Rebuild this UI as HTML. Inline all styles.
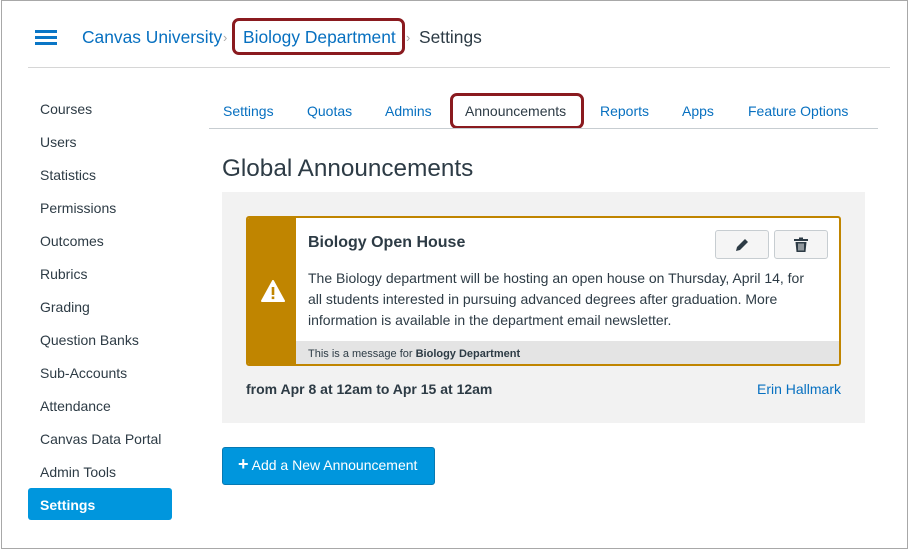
<!DOCTYPE html>
<html><head><style>
*{margin:0;padding:0;box-sizing:border-box}
body{width:910px;height:552px;background:#fff;font-family:"Liberation Sans",sans-serif;position:relative;overflow:hidden;color:#2d3b45}
.win{position:absolute;left:1px;top:0;width:907px;height:549px;border:1px solid #a8a8a8;background:#fff}
.a{position:absolute;white-space:nowrap}
.blue{color:#0770c0}
.side{position:absolute;left:40px;font-size:14px;color:#2d3b45}
.tab{position:absolute;top:103px;font-size:14px;color:#0770c0}
.red{position:absolute;border:3px solid #8a1a1f;border-radius:7px}
</style></head><body>
<div class="win"></div>
<div class="a" style="left:35px;top:30px;width:22px;height:3px;background:#0a76c6;box-shadow:0 6px 0 #0a76c6,0 12px 0 #0a76c6"></div>
<div class="a blue" style="left:82px;top:27px;font-size:17.4px">Canvas University</div>
<div class="a" style="left:223px;top:30px;font-size:13px;color:#aaa">›</div>
<div class="a blue" style="left:243px;top:27px;font-size:17.4px">Biology Department</div>
<div class="red" style="left:232px;top:18px;width:173px;height:37px"></div>
<div class="a" style="left:406px;top:30px;font-size:13px;color:#aaa">›</div>
<div class="a" style="left:419px;top:27px;font-size:17.4px;color:#2d3b45">Settings</div>
<div class="a" style="left:28px;top:67px;width:862px;height:1px;background:#d6d6d6"></div>

<div class="side" style="top:101px">Courses</div>
<div class="side" style="top:134px">Users</div>
<div class="side" style="top:167px">Statistics</div>
<div class="side" style="top:200px">Permissions</div>
<div class="side" style="top:233px">Outcomes</div>
<div class="side" style="top:266px">Rubrics</div>
<div class="side" style="top:299px">Grading</div>
<div class="side" style="top:332px">Question Banks</div>
<div class="side" style="top:365px">Sub-Accounts</div>
<div class="side" style="top:398px">Attendance</div>
<div class="side" style="top:431px">Canvas Data Portal</div>
<div class="side" style="top:464px">Admin Tools</div>
<div class="a" style="left:28px;top:488px;width:144px;height:32px;background:#0096dd;border-radius:3px"></div>
<div class="side" style="top:497px;color:#fff;font-weight:bold">Settings</div>

<div class="tab" style="left:223px">Settings</div>
<div class="tab" style="left:307px">Quotas</div>
<div class="tab" style="left:385px">Admins</div>
<div class="tab" style="left:465px;color:#2d3b45">Announcements</div>
<div class="red" style="left:450px;top:93px;width:134px;height:36px"></div>
<div class="tab" style="left:600px">Reports</div>
<div class="tab" style="left:682px">Apps</div>
<div class="tab" style="left:748px">Feature Options</div>
<div class="a" style="left:209px;top:128px;width:669px;height:1px;background:#c7cdd1"></div>

<div class="a" style="left:222px;top:155px;font-size:24.3px;color:#2d3b45">Global Announcements</div>
<div class="a" style="left:222px;top:192px;width:643px;height:231px;background:#f2f2f2"></div>
<div class="a" style="left:246px;top:216px;width:595px;height:150px;border:2px solid #c08500;background:#fff;border-radius:3px;overflow:hidden">
 <div class="a" style="left:0;top:0;width:48px;height:148px;background:#c08500"></div>
 <svg class="a" style="left:13px;top:62px" width="24" height="22" viewBox="0 0 24 22"><path d="M12 1 L23 21 H1 Z" fill="#fff" stroke="#fff" stroke-linejoin="round" stroke-width="2"/><rect x="10.7" y="7" width="2.6" height="8" fill="#c08500"/><rect x="10.7" y="16.5" width="2.6" height="2.6" fill="#c08500"/></svg>
 <div class="a" style="left:48px;top:123px;width:545px;height:25px;background:#e4e4e4"></div>
 <div class="a" style="left:60px;top:130px;font-size:11px;color:#2d3b45">This is a message for <b>Biology Department</b></div>
 <div class="a" style="left:60px;top:16px;font-size:16px;font-weight:bold;color:#2d3b45">Biology Open House</div>
 <div class="a" style="left:60px;top:50px;font-size:14px;line-height:21px;color:#2d3b45">The Biology department will be hosting an open house on Thursday, April 14, for<br>all students interested in pursuing advanced degrees after graduation. More<br>information is available in the department email newsletter.</div>
 <div class="a" style="left:467px;top:12px;width:54px;height:29px;background:#f5f5f5;border:1px solid #c7cdd1;border-radius:3px"></div>
 <svg class="a" style="left:486px;top:19px" width="16" height="16" viewBox="0 0 16 16"><path d="M2 14 L3 10 L11 2 L14 5 L6 13 Z" fill="#2d3b45"/></svg>
 <div class="a" style="left:526px;top:12px;width:54px;height:29px;background:#f5f5f5;border:1px solid #c7cdd1;border-radius:3px"></div>
 <svg class="a" style="left:545px;top:19px" width="16" height="16" viewBox="0 0 16 16"><rect x="1" y="2" width="14" height="2" fill="#2d3b45"/><rect x="6" y="0.5" width="4" height="2" fill="#2d3b45"/><path d="M2.5 5 H13.5 L12.5 15 H3.5 Z" fill="#2d3b45"/><rect x="5.5" y="6.5" width="1" height="7" fill="#f5f5f5"/><rect x="7.5" y="6.5" width="1" height="7" fill="#f5f5f5"/><rect x="9.5" y="6.5" width="1" height="7" fill="#f5f5f5"/></svg>
</div>
<div class="a" style="left:246px;top:381px;font-size:14px;font-weight:bold;color:#2d3b45">from Apr 8 at 12am to Apr 15 at 12am</div>
<div class="a blue" style="right:69px;top:381px;font-size:14px">Erin Hallmark</div>

<div class="a" style="left:222px;top:447px;width:213px;height:38px;background:#0096dd;border:1px solid #0679b3;border-radius:3px"></div>
<div class="a" style="left:238px;top:457px;font-size:14px;color:#fff"><b style="font-size:18px;line-height:14px">+</b> Add a New Announcement</div>
</body></html>
